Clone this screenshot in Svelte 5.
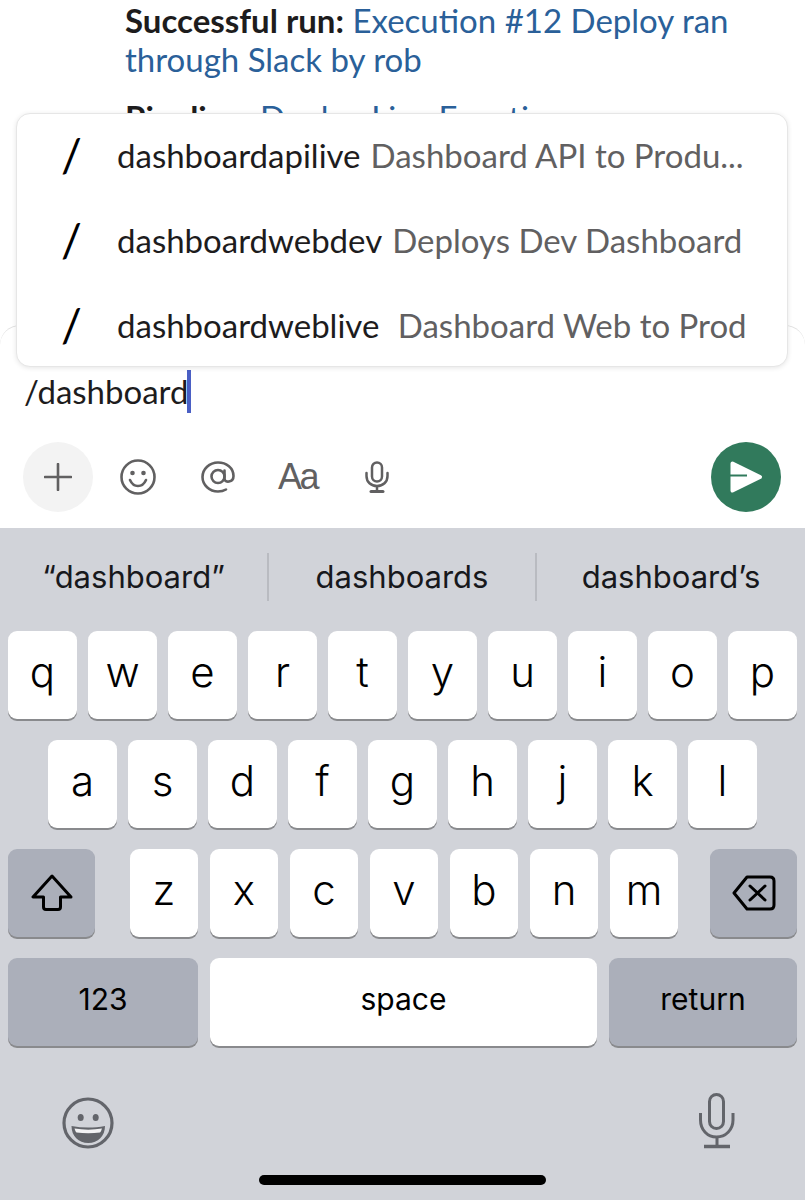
<script>
    const commands = [
        { name: "dashboardapilive", desc: "Dashboard API to Produ..." },
        { name: "dashboardwebdev", desc: "Deploys Dev Dashboard" },
        { name: "dashboardweblive", desc: " Dashboard Web to Prod" }
    ]
    const suggestions = ["“dashboard”", "dashboards", "dashboard’s"]
    const row1 = ["q", "w", "e", "r", "t", "y", "u", "i", "o", "p"]
    const row2 = ["a", "s", "d", "f", "g", "h", "j", "k", "l"]
    const row3 = ["z", "x", "c", "v", "b", "n", "m"]
</script>

<main>
    <section class="messages">
        <p><b>Successful run:</b> <a href="#run">Execution #12 Deploy ran through Slack by rob</a></p>
        <p class="second"><b>Pipeline:</b> <a href="#fn">Deploy Live Function</a></p>
    </section>

    <div class="popup">
        {#each commands as c}
            <div class="command">
                <span class="slash">/</span>
                <span class="name">{c.name}</span>
                <span class="desc">{c.desc}</span>
            </div>
        {/each}
    </div>

    <section class="composer">
        <div class="input">/dashboard<i class="caret"></i></div>
        <div class="tools">
            <div class="plus">
                <svg width="28" height="28" viewBox="0 0 28 28"><path d="M14 1v26M1 14h26" stroke="#616061" stroke-width="2.6" stroke-linecap="round"/></svg>
            </div>
            <svg class="tool t-smile" width="36" height="36" viewBox="0 0 36 36" fill="none" stroke="#616061" stroke-width="2.6">
                <circle cx="18" cy="18" r="16.500"/>
                <circle cx="12.500" cy="14" r="2.300" fill="#616061" stroke="none"/>
                <circle cx="23.500" cy="14" r="2.300" fill="#616061" stroke="none"/>
                <path d="M10 21c2 4.500 5 6 8 6s6-1.500 8-6" stroke-linecap="round"/>
            </svg>
            <svg class="tool t-at" width="34" height="32" viewBox="0 0 34 32" fill="none" stroke="#616061" stroke-width="2.6">
                <circle cx="17" cy="15.500" r="6.500"/>
                <path d="M23.500 9.500v8c0 5 9 4 9-2.500C32.500 7 25.500 1.500 17 1.500S1.500 8 1.500 16 8.500 30.500 17 30.500c3 0 5.500-.5 8-2" stroke-linecap="round"/>
            </svg>
            <span class="aa">Aa</span>
            <svg class="tool t-mic" width="24" height="32" viewBox="0 0 24 32" fill="none" stroke="#616061" stroke-width="2.500">
                <rect x="7" y="1.500" width="10" height="19" rx="5"/>
                <path d="M1.500 12v3c0 6 4.500 10 10.500 10s10.500-4 10.500-10v-3M12 25v5" stroke-linecap="round"/>
                <path d="M6 30.500h12" stroke-width="3" stroke-linecap="round"/>
            </svg>
            <div class="send">
                <svg width="34" height="34" viewBox="0 0 34 34">
                    <path d="M3.500 3.500 31 17 3.500 30.500z" fill="#fff" stroke="#fff" stroke-width="4" stroke-linejoin="round"/>
                    <path d="M1 15.500h17" stroke="#317a5c" stroke-width="2"/>
                </svg>
            </div>
        </div>
    </section>

    <section class="keyboard">
        <div class="suggestions">
            {#each suggestions as s, i}
                <span class="sugg" class:first={i === 0}>{s}</span>
            {/each}
        </div>

        <div class="keys">
            <div class="row">
                {#each row1 as k}<div class="key">{k}</div>{/each}
            </div>
            <div class="row">
                {#each row2 as k}<div class="key">{k}</div>{/each}
            </div>
            <div class="row between">
                <div class="key dark wide icon">
                    <svg width="42" height="38" viewBox="0 0 42 38" fill="none" stroke="#000" stroke-width="3" stroke-linejoin="round"><path d="M21 2 2 23h10.500v10c0 1.500 1 2.500 2.500 2.500h12c1.500 0 2.500-1 2.500-2.500V23H40z"/></svg>
                </div>
                <div class="letters">
                    {#each row3 as k}<div class="key">{k}</div>{/each}
                </div>
                <div class="key dark wide icon">
                    <svg width="44" height="36" viewBox="0 0 44 36" fill="none" stroke="#000" stroke-width="3" stroke-linejoin="round"><path d="M15 2h23c2.500 0 4 1.500 4 4v24c0 2.500-1.500 4-4 4H15L2 18z"/><path d="m18 11 15 14M33 11 18 25" stroke-linecap="round"/></svg>
                </div>
            </div>
            <div class="row between">
                <div class="key dark label num">123</div>
                <div class="key label space">space</div>
                <div class="key dark label ret">return</div>
            </div>
        </div>

        <div class="bottom">
            <svg class="emoji" width="52" height="52" viewBox="0 0 52 52">
                <circle cx="26" cy="26" r="24" fill="none" stroke="#63656b" stroke-width="3.200"/>
                <ellipse cx="18.700" cy="20.500" rx="3" ry="3.600" fill="#63656b"/>
                <ellipse cx="33.700" cy="20.500" rx="3" ry="3.600" fill="#63656b"/>
                <path d="M9.500 29c11 2 22.500 2 33.500 0 0 10-7 17-16.700 17S9.500 39 9.500 29z" fill="#63656b"/>
                <path d="M12.500 31.500c9 1.500 18.500 1.500 27.500 0-.5 1.500-1 3-2 4-7.500 1-16 1-23.500 0-1-1-1.500-2.500-2-4z" fill="#f2f2f4"/>
            </svg>
            <svg width="38" height="56" viewBox="0 0 38 56" fill="none" stroke="#63656b" stroke-width="3">
                <rect x="11.500" y="1.500" width="14" height="34" rx="7"/>
                <path d="M2.500 20v7c0 10 7 17 16 17s16.500-7 16.500-17v-7M19 44v9"/>
                <path d="M6 53.500h26" stroke-width="3.500"/>
            </svg>
        </div>
        <div class="home"></div>
    </section>
</main>

<style>
    :global(body){
        margin: 0;
        background: #fff;
    }

    main{
        position: relative;
        width: 805px;
        height: 1200px;
        overflow: hidden;
        display: flex;
        flex-direction: column;
        font-family: Lato, "Liberation Sans", sans-serif;
    }

    .messages{
        height: 325px;
        box-sizing: border-box;
        padding: 0 40px 0 125px;
        font-size: 33px;
        line-height: 39px;
        color: #1d1c1d;
    }

    .messages p{
        margin: 1px 0 0 0;
    }

    .messages .second{
        margin-top: 19px;
    }

    .messages a{
        color: #2a6099;
        text-decoration: none;
    }

    .popup{
        position: absolute;
        left: 16px;
        top: 113px;
        width: 772px;
        height: 254px;
        box-sizing: border-box;
        background: #fff;
        border: 1px solid #e6e6e6;
        border-radius: 14px;
        box-shadow: 0 1px 5px rgba(0,0,0,0.1);
    }

    .command{
        height: 85px;
        box-sizing: border-box;
        padding-bottom: 4px;
        display: flex;
        align-items: center;
        font-size: 33px;
        white-space: nowrap;
    }

    .slash{
        width: 100px;
        padding-left: 44px;
        box-sizing: border-box;
        font-size: 46px;
        color: #000;
    }

    .name{
        color: #1d1c1d;
        margin-right: 10px;
    }

    .desc{
        color: #616061;
        white-space: pre;
    }

    .composer{
        height: 203px;
        box-sizing: border-box;
        border-radius: 20px 20px 0 0;
        border-top: 1px solid #e0e0e0;
        background: #fff;
    }

    .input{
        padding-top: 43px;
        padding-left: 24px;
        display: flex;
        align-items: center;
        height: 44px;
        font-size: 33px;
        color: #1d1c1d;
    }

    .caret{
        width: 4px;
        height: 43px;
        margin-left: -1px;
        background: #4a5fc4;
    }

    .tools{
        margin-top: 29px;
        padding: 0 24px 0 23px;
        height: 70px;
        display: flex;
        align-items: center;
    }

    .plus{
        width: 70px;
        height: 70px;
        border-radius: 50%;
        background: #f3f3f3;
        display: flex;
        align-items: center;
        justify-content: center;
    }

    .t-smile{
        margin-left: 27px;
    }

    .t-at{
        margin-left: 45px;
    }

    .aa{
        margin-left: 43px;
        width: 39px;
        font-family: "Liberation Sans", sans-serif;
        font-size: 36px;
        letter-spacing: -2.5px;
        color: #616061;
    }

    .t-mic{
        margin-left: 48px;
    }

    .send{
        margin-left: auto;
        width: 70px;
        height: 70px;
        border-radius: 50%;
        background: #317a5c;
        display: flex;
        align-items: center;
        justify-content: center;
    }

    .keyboard{
        position: relative;
        flex: 1;
        background: #d1d3d9;
        font-family: Inter, "Liberation Sans", sans-serif;
        color: #000;
    }

    .suggestions{
        height: 103px;
        display: grid;
        grid-template-columns: 267px 268px 270px;
        align-items: center;
        font-size: 31px;
        color: #17181c;
    }

    .sugg{
        text-align: center;
        height: 48px;
        line-height: 48px;
        margin-top: -5px;
        border-left: 2px solid #b9bbc1;
    }

    .sugg.first{
        border-left: none;
    }

    .keys{
        display: flex;
        flex-direction: column;
        gap: 21px;
        padding: 0 8px;
    }

    .row, .letters{
        display: flex;
        justify-content: center;
        gap: 11.5px;
    }

    .between{
        justify-content: space-between;
    }

    .letters{
        margin-left: 3px;
    }

    .key{
        width: 68.5px;
        height: 88px;
        box-sizing: border-box;
        background: #fff;
        border-radius: 9px;
        box-shadow: 0 2px 0 #898a8d;
        display: flex;
        align-items: center;
        justify-content: center;
        font-size: 42px;
        font-weight: 300;
        padding-bottom: 8px;
    }

    .dark{
        background: #abafba;
    }

    .wide{
        width: 87px;
    }

    .icon{
        padding-bottom: 0;
    }

    .label{
        font-size: 30px;
        font-weight: 400;
        padding-bottom: 6px;
    }

    .num{
        width: 190px;
    }

    .space{
        width: 387px;
    }

    .ret{
        width: 188px;
    }

    .bottom{
        box-sizing: border-box;
        height: 118px;
        padding: 47px 69px 0 62px;
        display: flex;
        justify-content: space-between;
        align-items: flex-start;
    }

    .emoji{
        margin-top: 4px;
    }

    .home{
        position: absolute;
        left: 259px;
        top: 647px;
        width: 287px;
        height: 10px;
        border-radius: 5px;
        background: #000;
    }
</style>
